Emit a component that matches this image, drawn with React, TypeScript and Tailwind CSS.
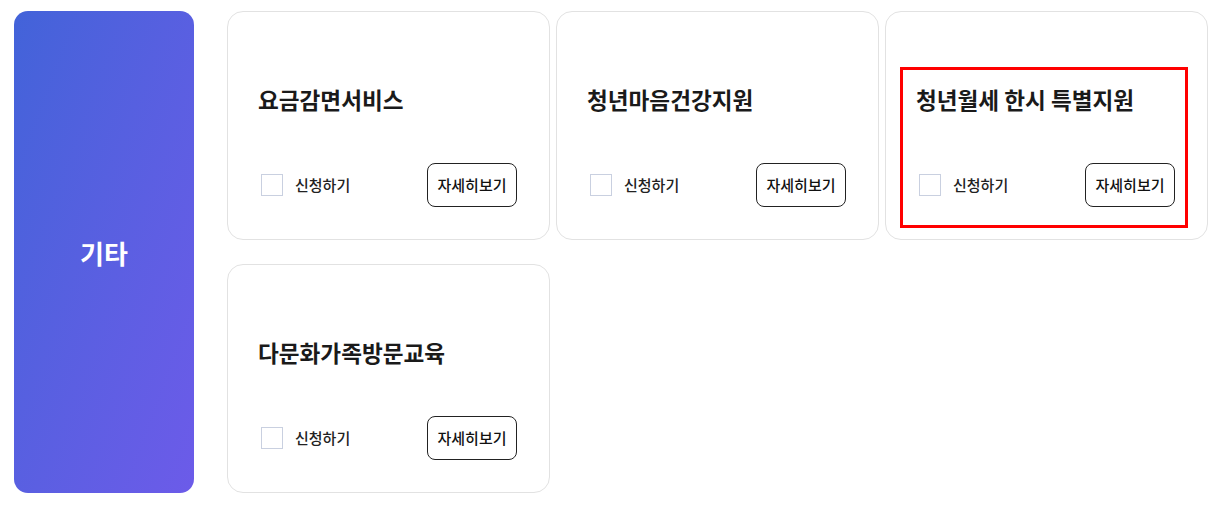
const services = [
  { id: 1, title: "요금감면서비스", highlighted: false },
  { id: 2, title: "청년마음건강지원", highlighted: false },
  { id: 3, title: "청년월세 한시 특별지원", highlighted: true },
  { id: 4, title: "다문화가족방문교육", highlighted: false },
];

const ServiceCard = ({ title, highlighted }: { title: string; highlighted: boolean }) => (
  <div className="h-[229px] rounded-2xl border border-[#e2e2e2] bg-white pt-[58px]">
    <div
      className={`ml-[17px] mr-[22px] flex h-[155px] flex-col justify-between pl-[13px] pr-[10px] pt-[16px] pb-[18px] ${
        highlighted ? "outline-[3px] outline-solid outline-[#ff0000]" : ""
      }`}
    >
      <h3 className="text-[22.6px] font-bold leading-[28px] text-[#1a1a1a]">{title}</h3>
      <div className="flex items-center justify-between">
        <label className="ml-[3px] flex items-center gap-3">
          <span className="block h-[22px] w-[22px] border border-[#c9d0e0] bg-white" />
          <span className="text-[15px] font-medium text-[#222]">신청하기</span>
        </label>
        <button className="h-[44px] w-[90px] rounded-lg border border-[#222] text-[15px] font-medium text-[#111]">
          자세히보기
        </button>
      </div>
    </div>
  </div>
);

export default function App() {
  return (
    <div
      className="flex min-h-[506px] gap-[33px] bg-white pl-[14px] pr-[23px] pt-[11px]"
      style={{ fontFamily: '"Noto Sans CJK KR", "Noto Sans", sans-serif' }}
    >
      <div className="flex h-[482px] w-[180px] shrink-0 items-center justify-center rounded-[14px] bg-linear-to-br from-[#4263d9] to-[#6c5be9]">
        <span className="text-[26px] font-bold text-white">기타</span>
      </div>
      <div className="grid flex-1 grid-cols-3 content-start gap-x-[6px] gap-y-[24px]">
        {services.map((s) => (
          <ServiceCard key={s.id} title={s.title} highlighted={s.highlighted} />
        ))}
      </div>
    </div>
  );
}
